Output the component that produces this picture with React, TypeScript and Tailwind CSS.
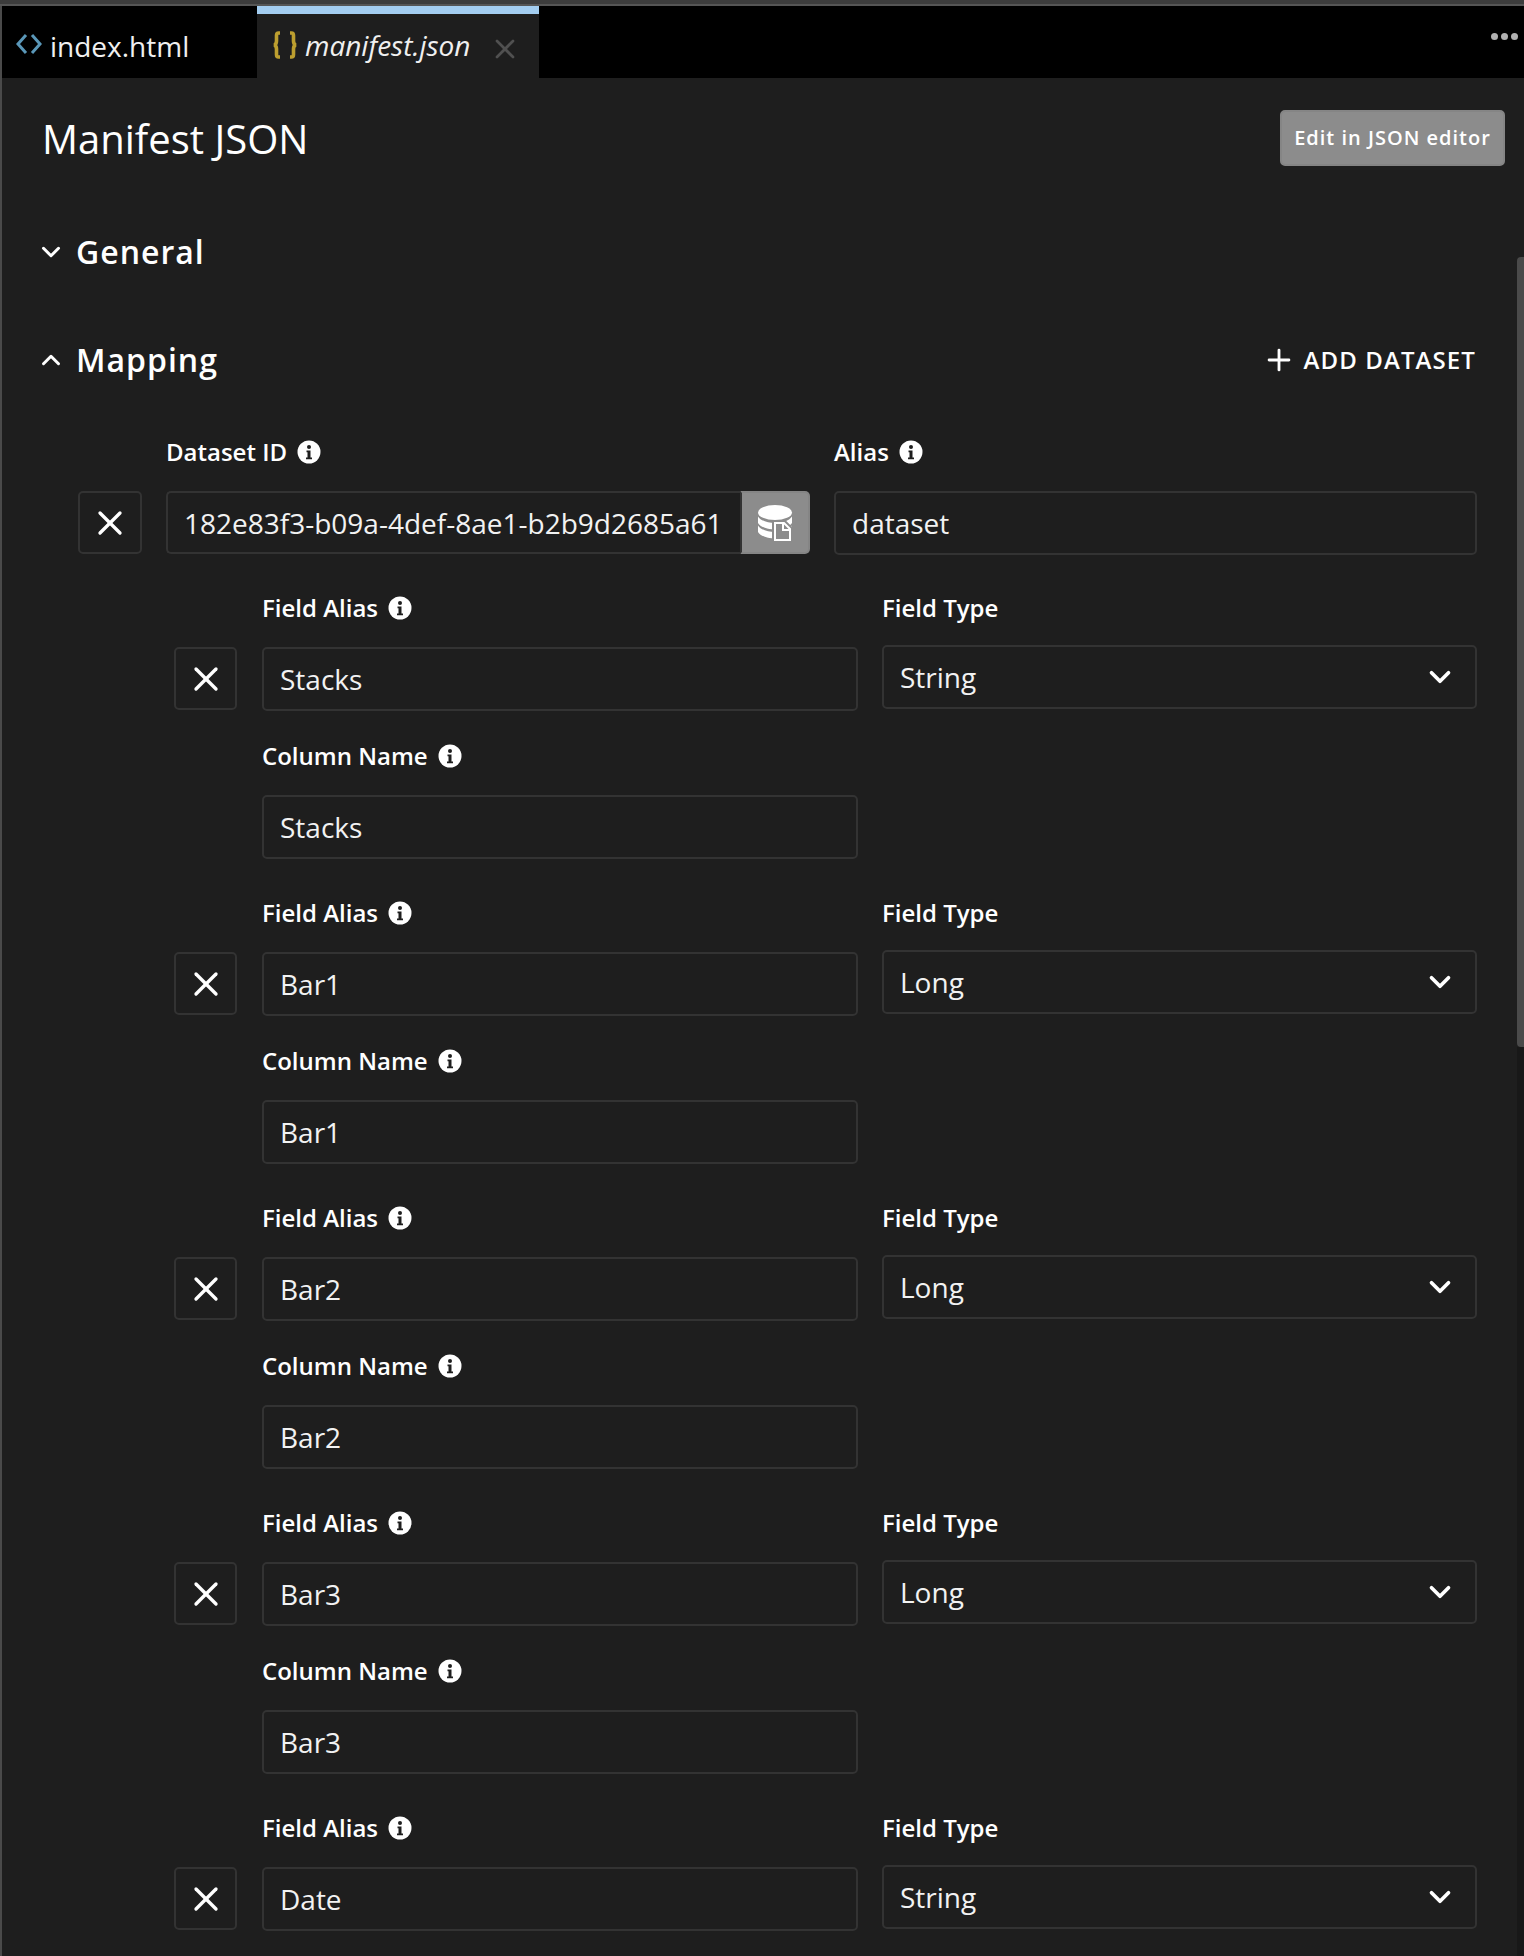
import { ChevronDown, ChevronUp, Plus, X } from "lucide-react";

const font = "font-['Open_Sans',sans-serif]";

function InfoIcon() {
  return (
    <svg width="24" height="24" viewBox="0 0 24 24" className="shrink-0">
      <circle cx="12" cy="12" r="11.5" fill="#ffffff" />
      <circle cx="12" cy="7" r="2" fill="#1e1e1e" />
      <path d="M9.5 10.5h4v7h1.5v1.8H9v-1.8h1.5v-5.2h-1z" fill="#1e1e1e" />
    </svg>
  );
}

function FieldLabel({ text, info = true }: { text: string; info?: boolean }) {
  return (
    <div className="flex h-6 items-center gap-[10px] text-[24px] font-semibold leading-6 text-white">
      <span>{text}</span>
      {info && <InfoIcon />}
    </div>
  );
}

function TextBox({ value, className = "" }: { value: string; className?: string }) {
  return (
    <div className={`flex h-[64px] items-center rounded-[5px] border-2 border-[#333333] px-4 text-[28px] text-[#f2f2f2] ${className}`}>
      {value}
    </div>
  );
}

function RemoveButton({ className = "" }: { className?: string }) {
  return (
    <button className={`flex h-[63px] items-center justify-center rounded-[5px] border-2 border-[#333333] text-white ${className}`}>
      <X size={40} strokeWidth={2} />
    </button>
  );
}

function DatasetIcon() {
  return (
    <svg width="36" height="36" viewBox="0 0 36 36" className="ml-[2px]">
      <ellipse cx="17" cy="7.500" rx="17" ry="7.500" fill="#ffffff" />
      <path d="M0 11.500C3 16 10 18 17 18s14-2 17-6.500V18c-3 4.500-10 6.500-17 6.500S3 22.500 0 18z" fill="#ffffff" />
      <path d="M0 20.500C3 25 10 27 17 27s14-2 17-6.500V27c-3 4.500-10 6.500-17 6.500S3 31.500 0 27z" fill="#ffffff" />
      <path d="M17 18h9l6 6v11H17z" fill="#8c8c8c" stroke="#8c8c8c" strokeWidth="6" />
      <path d="M17 18h9l6 6v11H17z" fill="#8c8c8c" stroke="#ffffff" strokeWidth="2" />
      <path d="M25 18v7h7" fill="none" stroke="#ffffff" strokeWidth="2" />
    </svg>
  );
}

function FieldMapping({ name, type, last = false }: { name: string; type: string; last?: boolean }) {
  return (
    <div className="grid h-[305px] grid-cols-[64px_596px_595px] grid-rows-[51px_64px_33px_51px_64px] gap-x-[24px] pl-[172px]">
      <div />
      <FieldLabel text="Field Alias" />
      <FieldLabel text="Field Type" info={false} />
      <div className="self-start">
        <RemoveButton className="w-[63px]" />
      </div>
      <TextBox value={name} />
      <div className="-mt-[2px] flex h-[64px] items-center justify-between rounded-[5px] border-2 border-[#333333] pl-4 pr-[18px] text-[28px] text-[#f2f2f2]">
        {type}
        <ChevronDown size={34} strokeWidth={2.6} className="text-white" />
      </div>
      {!last && (
        <>
          <div className="col-span-3" />
          <div />
          <FieldLabel text="Column Name" />
          <div />
          <div />
          <TextBox value={name} />
        </>
      )}
    </div>
  );
}

export default function App() {
  return (
    <div className={`${font} relative h-[1956px] w-[1524px] overflow-hidden bg-[#1e1e1e]`}>
      <div className="h-[4px] bg-[#3c3c3c]" />
      <div className="h-[2px] bg-[#555555]" />
      <div className="flex h-[72px] border-l-2 border-[#4a4a4a] bg-black">
        <div className="flex w-[255px] items-center pl-[14px] pt-[7px] text-[28px] text-[#f0f0f0]">
          <svg width="26" height="24" viewBox="0 0 26 24" fill="none" stroke="#5a97b8" strokeWidth="3" className="mb-[3px] mr-[8px]">
            <path d="M10 3 2 12l8 9" />
            <path d="M16 3l8 9-8 9" />
          </svg>
          index.html
        </div>
        <div className="flex w-[282px] items-center border-t-[8px] border-[#a3cdf0] bg-[#1e1e1e] pb-[2px] pl-[15px] text-[28px] italic text-[#f0f0f0]">
          <svg width="26" height="28" viewBox="0 0 26 28" fill="none" stroke="#bd9f2f" strokeWidth="3.6" className="mr-[7px]">
            <path d="M8 2H6.500Q4.500 2 4.500 4.500V10Q4.500 13.500 2 14Q4.500 14.500 4.500 18V23.500Q4.500 26 6.500 26H8" />
            <path d="M18 2h1.500q2 0 2 2.500V10q0 3.500 2.500 4-2.500.5-2.500 4v5.500q0 2.500-2 2.500H18" />
          </svg>
          manifest.json
          <X size={32} strokeWidth={2} className="ml-[19px] mt-[7px] text-[#505050]" />
        </div>
        <div className="ml-auto flex items-center gap-[3px] pb-[12px] pr-[6px]">
          <span className="h-[7px] w-[7px] rounded-full bg-[#b0b0b0]" />
          <span className="h-[7px] w-[7px] rounded-full bg-[#b0b0b0]" />
          <span className="h-[7px] w-[7px] rounded-full bg-[#b0b0b0]" />
        </div>
      </div>

      <div className="border-l-2 border-[#4a4a4a]">
        <div className="flex items-center justify-between pl-[40px] pr-[19px] pt-8">
          <h1 className="pt-[2px] text-[40px] leading-[54px] text-white">Manifest JSON</h1>
          <button className="h-[56px] w-[225px] rounded-[5px] border-2 border-[#858585] bg-[#8c8c8c] text-[20px] font-semibold tracking-[1px] text-white">
            Edit in JSON editor
          </button>
        </div>

        <div className="mt-[66px] flex h-10 items-center pl-[34px] text-[32px] font-semibold leading-10 tracking-[1px] text-white">
          <ChevronDown size={30} strokeWidth={2.4} className="mr-[10px]" />
          General
        </div>

        <div className="mt-[68px] flex h-10 items-center pl-[34px] pr-[48px] text-[32px] font-semibold leading-10 tracking-[1px] text-white">
          <ChevronUp size={30} strokeWidth={2.4} className="mr-[10px]" />
          Mapping
          <span className="ml-auto flex items-center gap-2 text-[24px] tracking-[1.1px]">
            <Plus size={34} strokeWidth={2} />
            ADD DATASET
          </span>
        </div>

        <div className="mt-[60px] grid grid-cols-[64px_644px_643px] grid-rows-[51px_63px] gap-x-6 pl-[76px]">
          <div />
          <FieldLabel text="Dataset ID" />
          <FieldLabel text="Alias" />
          <RemoveButton />
          <div className="flex h-[63px]">
            <div className="flex flex-1 items-center rounded-l-[5px] border-2 border-r-0 border-[#333333] pl-4 text-[28px] text-[#f2f2f2]">
              182e83f3-b09a-4def-8ae1-b2b9d2685a61
            </div>
            <div className="flex w-[70px] items-center justify-center rounded-r-[5px] border-2 border-[#858585] border-l-[#333333] bg-[#8c8c8c]">
              <DatasetIcon />
            </div>
          </div>
          <TextBox value="dataset" className="h-[63px]" />
        </div>

        <div className="mt-[42px]">
          <FieldMapping name="Stacks" type="String" />
          <FieldMapping name="Bar1" type="Long" />
          <FieldMapping name="Bar2" type="Long" />
          <FieldMapping name="Bar3" type="Long" />
          <FieldMapping name="Date" type="String" last />
        </div>
      </div>

      <div className="absolute right-0 top-[257px] h-[790px] w-[7px] rounded-l-[4px] bg-[#4a4a4a]" />
      <div className="absolute bottom-0 right-0 top-[1047px] w-[7px] bg-[#181818]" />
    </div>
  );
}
